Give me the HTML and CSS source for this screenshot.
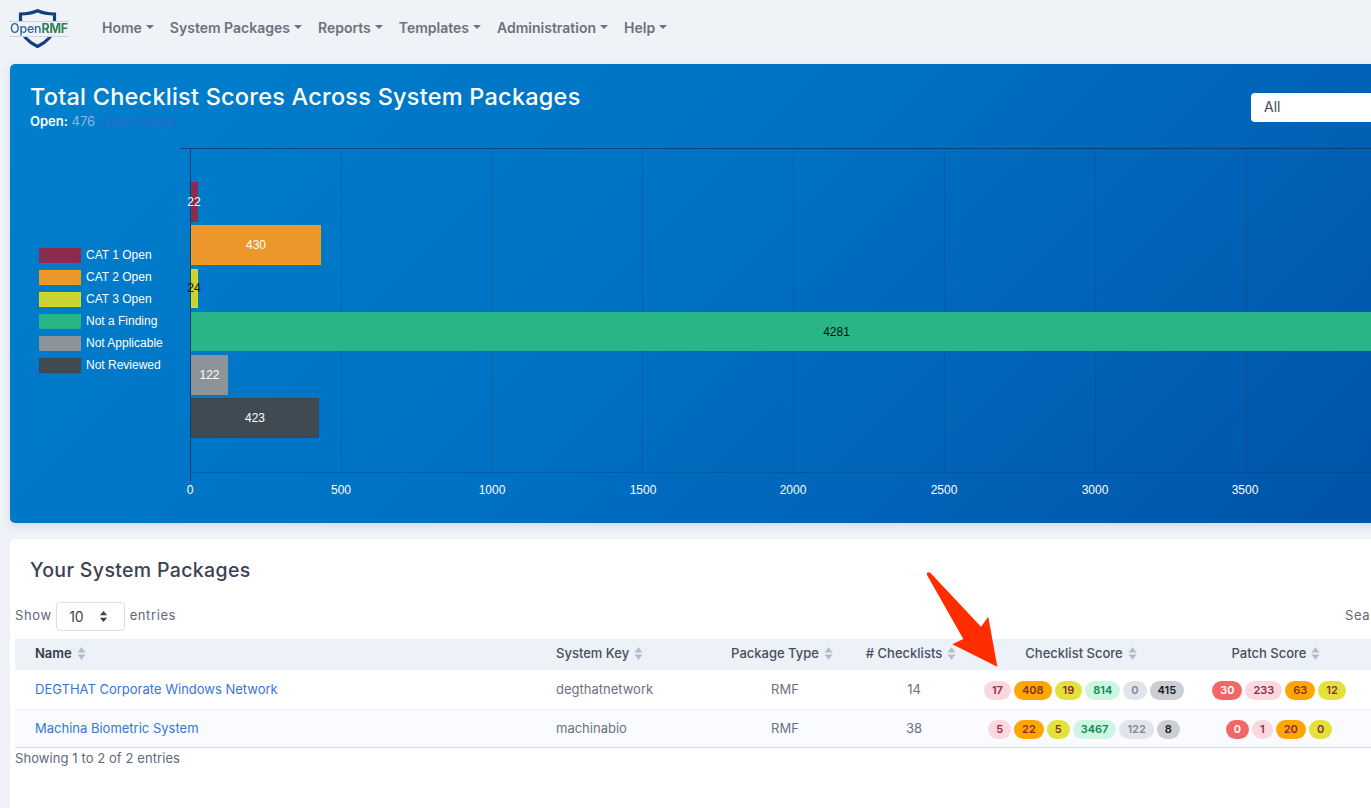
FILE: index.html
```html
<!DOCTYPE html>
<html lang="en">
<head>
<meta charset="utf-8">
<title>OpenRMF</title>
<link rel="stylesheet" href="styles.css">
</head>
<body>
<div class="page">
<header class="topbar">
  <div class="logo">
    <svg class="shield" viewBox="0 0 40 40" width="40" height="40"><path d="M19.5 1.7 C24 3.6 29 4.8 36.5 5 L36.5 16 C36.5 26 28 33.5 19.5 37.5 C11 33.5 2.5 26 2.5 16 L2.5 5 C10 4.8 15 3.6 19.5 1.7 Z" fill="none" stroke="#123f7e" stroke-width="3.2"/></svg>
    <span class="logo-text"><span class="logo-a">Open</span><span class="logo-b">RMF</span></span>
  </div>
  <nav class="nav">
    <a class="nav-item">Home</a>
    <a class="nav-item">System Packages</a>
    <a class="nav-item">Reports</a>
    <a class="nav-item">Templates</a>
    <a class="nav-item">Administration</a>
    <a class="nav-item">Help</a>
  </nav>
</header>

<section class="hero">
  <div class="hero-head">
    <div>
      <h1>Total Checklist Scores Across System Packages</h1>
      <p class="sub"><b>Open:</b> <span class="sub-n">476</span> <span class="sub-l">(save image)</span></p>
    </div>
    <div class="filter">All</div>
  </div>
  <div class="chart">
    <div class="legend">
      <div class="lg"><i class="sw c1"></i>CAT 1 Open</div>
      <div class="lg"><i class="sw c2"></i>CAT 2 Open</div>
      <div class="lg"><i class="sw c3"></i>CAT 3 Open</div>
      <div class="lg"><i class="sw c4"></i>Not a Finding</div>
      <div class="lg"><i class="sw c5"></i>Not Applicable</div>
      <div class="lg"><i class="sw c6"></i>Not Reviewed</div>
    </div>
    <div class="plot">
      <div class="gridlines"><i></i><i></i><i></i><i></i><i></i><i></i><i></i><i></i><i></i></div>
      <div class="bars">
        <div class="bar c1" style="width:7px"><span class="v nudge">22</span></div>
        <div class="bar c2" style="width:130px"><span class="v">430</span></div>
        <div class="bar c3" style="width:7px"><span class="v dark nudge">24</span></div>
        <div class="bar c4" style="width:1291px"><span class="v dark">4281</span></div>
        <div class="bar c5" style="width:37px"><span class="v">122</span></div>
        <div class="bar c6" style="width:128px"><span class="v">423</span></div>
      </div>
      <div class="ticks"><span>0</span><span>500</span><span>1000</span><span>1500</span><span>2000</span><span>2500</span><span>3000</span><span>3500</span></div>
    </div>
  </div>
</section>

<section class="card">
  <h2>Your System Packages</h2>
  <div class="controls">
    <span class="label">Show</span>
    <span class="select">10<svg viewBox="0 0 10 14" width="9" height="13"><path d="M5 1 L9 5.5 H1 Z M5 13 L1 8.5 H9 Z" fill="#3b4252"/></svg></span>
    <span class="label">entries</span>
    <span class="label search">Search:</span>
  </div>
  <table class="tbl">
    <colgroup><col class="w1"><col class="w2"><col class="w3"><col class="w4"><col class="w5"><col class="w6"><col class="w7"></colgroup>
    <thead><tr>
      <th class="l">Name<svg class="sort" viewBox="0 0 8 13"><path d="M4 0 L8 5.5 H0 Z M4 13 L0 7.5 H8 Z"/></svg></th>
      <th class="l">System Key<svg class="sort" viewBox="0 0 8 13"><path d="M4 0 L8 5.5 H0 Z M4 13 L0 7.5 H8 Z"/></svg></th>
      <th>Package Type<svg class="sort" viewBox="0 0 8 13"><path d="M4 0 L8 5.5 H0 Z M4 13 L0 7.5 H8 Z"/></svg></th>
      <th># Checklists<svg class="sort" viewBox="0 0 8 13"><path d="M4 0 L8 5.5 H0 Z M4 13 L0 7.5 H8 Z"/></svg></th>
      <th>Checklist Score<svg class="sort" viewBox="0 0 8 13"><path d="M4 0 L8 5.5 H0 Z M4 13 L0 7.5 H8 Z"/></svg></th>
      <th>Patch Score<svg class="sort" viewBox="0 0 8 13"><path d="M4 0 L8 5.5 H0 Z M4 13 L0 7.5 H8 Z"/></svg></th>
      <th></th>
    </tr></thead>
    <tbody>
      <tr>
        <td class="l"><a class="link">DEGTHAT Corporate Windows Network</a></td>
        <td class="l">degthatnetwork</td><td>RMF</td><td>14</td>
        <td><div class="pills"><span class="p lred">17</span><span class="p orange">408</span><span class="p yellow">19</span><span class="p green">814</span><span class="p gray">0</span><span class="p dgray">415</span></div></td>
        <td><div class="pills"><span class="p red">30</span><span class="p lred">233</span><span class="p orange">63</span><span class="p yellow">12</span></div></td>
        <td></td>
      </tr>
      <tr class="alt">
        <td class="l"><a class="link">Machina Biometric System</a></td>
        <td class="l">machinabio</td><td>RMF</td><td>38</td>
        <td><div class="pills"><span class="p lred">5</span><span class="p orange">22</span><span class="p yellow">5</span><span class="p green">3467</span><span class="p gray">122</span><span class="p dgray">8</span></div></td>
        <td><div class="pills"><span class="p red">0</span><span class="p lred">1</span><span class="p orange">20</span><span class="p yellow">0</span></div></td>
        <td></td>
      </tr>
    </tbody>
  </table>
  <p class="info">Showing 1 to 2 of 2 entries</p>
  <svg class="arrow" viewBox="0 0 90 110" width="90" height="110"><path d="M7 10 C6 7 9 6.5 11 8.5 L61 61.7 L68.3 51.7 L77.3 101.7 L32.3 79.3 L43.3 74 Z" fill="#ff2d00"/></svg>
</section>
</div>
</body>
</html>
```
FILE: styles.css
```css
* { box-sizing: border-box; }
html, body { margin: 0; height: 100%; overflow: hidden; }
body { background: #eff3f8; font-family: "Inter", "Open Sans", sans-serif; color: #5a6677; }
.page { width: 1700px; padding: 0 10px; position: relative; }

.topbar { height: 64px; display: flex; align-items: center; }
.logo { width: 92px; height: 56px; flex: none; margin-top: -6px; position: relative; filter: blur(.35px); }
.shield { position: absolute; left: 8px; top: 8px; }
.logo-text { position: absolute; left: -1px; top: 20px; font-size: 12.5px; font-weight: 500; letter-spacing: -.2px; background: #eff3f8; line-height: 12px; padding: 1px; border-top: 1px solid #c9d3e4; border-bottom: 1px solid #c9d3e4; }
.logo-a { color: #34609c; }
.logo-b { color: #2f7f53; font-weight: 700; }
.nav { display: flex; gap: 16px; margin-top: -10px; }
.nav-item { font-size: 14px; font-weight: 600; color: #6c727c; display: flex; align-items: center; }
.nav-item::after { content: ""; margin-left: 4px; border-top: 4px solid #6c727c; border-left: 4px solid transparent; border-right: 4px solid transparent; }

.hero { width: 1500px; height: 459px; border-radius: 5px; background: linear-gradient(135deg, #0080cc 0%, #0071c3 45%, #004fa5 100%); box-shadow: 0 3px 8px rgba(60,80,110,.15); color: #fff; padding: 18px 20px 0; }
.hero-head { display: flex; justify-content: space-between; height: 66px; width: 1340px; }
h1 { margin: 0; font-size: 23.5px; line-height: 30px; font-weight: 500; letter-spacing: .23px; }
.sub { margin: 0; font-size: 13px; line-height: 18px; }
.sub b { font-weight: 600; }
.sub-n { color: #8ab9e0; }
.sub-l { color: #2f6bcc; }
.filter { background: #fff; color: #444b58; width: 200px; height: 29px; margin-top: 11px; border-radius: 4px; font-size: 14px; padding: 4px 13px; line-height: 19px; margin-right: -81px; flex: none; }

.chart { display: flex; font-family: "Liberation Sans", Arial, sans-serif; font-size: 12px; }
.legend { width: 151px; margin-left: 9px; padding-top: 96px; flex: none; }
.lg { height: 22px; display: flex; align-items: center; gap: 5px; color: #fff; }
.sw { width: 42px; height: 15px; display: block; flex: none; }
.c1 { background: #8a2c4b; border: 1px solid #8e2b50; }
.c2 { background: #ec962c; border: 1px solid #f59d10; }
.c3 { background: #cad332; border: 1px solid #d8dc14; }
.c4 { background: #29b585; border: 1px solid #22b48c; }
.c5 { background: #8d9499; border: 1px solid #8b9298; }
.c6 { background: #3f4a53; border: 1px solid #3b4650; }

.plot { position: relative; width: 1400px; height: 372px; margin-left: -10px; }
.gridlines { position: absolute; left: 10px; top: 0; width: 1400px; height: 325px; border-bottom: 1px solid rgba(20,40,70,.25); display: flex; }
.gridlines::before { content: ""; position: absolute; left: -9px; right: 0; top: 0; border-top: 1px solid rgba(15,35,65,.55); }
.gridlines::after { content: ""; position: absolute; left: 0; top: 0; height: 333px; border-left: 1px solid rgba(15,40,75,.6); }
.gridlines i { width: 150.8px; flex: none; border-left: 1px solid rgba(10,40,80,.18); }
.bars { position: absolute; left: 11px; top: 34px; display: flex; flex-direction: column; gap: 3.8px; }
.bar { height: 39.5px; display: flex; align-items: center; justify-content: center; }
.v { color: #fff; white-space: nowrap; }
.v.dark { color: #111; }
.v.nudge { margin-left: -1px; }
.ticks { position: absolute; left: 10px; top: 335px; width: 1400px; color: #fff; }
.ticks span { position: absolute; transform: translateX(-50%); }
.ticks span:nth-child(1) { left: 0; }
.ticks span:nth-child(2) { left: 151px; }
.ticks span:nth-child(3) { left: 302px; }
.ticks span:nth-child(4) { left: 453px; }
.ticks span:nth-child(5) { left: 603px; }
.ticks span:nth-child(6) { left: 754px; }
.ticks span:nth-child(7) { left: 905px; }
.ticks span:nth-child(8) { left: 1055px; }

.card { width: 1500px; margin-top: 16px; height: 300px; background: #fff; border-radius: 5px 0 0 0; padding: 0 5px; position: relative; font-size: 13px; }
h2 { margin: 0; padding: 17px 15px 0; font-size: 19.5px; line-height: 28px; font-weight: 500; letter-spacing: .35px; color: #3a4252; }
.controls { width: 1400px; display: flex; align-items: center; gap: 4.5px; margin-top: 18px; height: 29px; position: relative; color: #5e6878; letter-spacing: .6px; }
.label { padding-bottom: 3px; }
.select { width: 69px; height: 29px; border: 1px solid #d5dfee; border-radius: 4px; display: flex; align-items: center; justify-content: space-between; padding: 0 16px 0 12px; color: #3f4654; font-size: 14px; letter-spacing: 0; }
.search { position: absolute; left: 1330px; }
.tbl { width: 1444px; table-layout: fixed; border-collapse: collapse; margin-top: 8px; border-bottom: 1px solid #d4e0ef; }
.w1 { width: 521px; } .w2 { width: 175px; } .w3 { width: 148px; } .w4 { width: 110px; } .w5 { width: 230px; } .w6 { width: 160px; } .w7 { width: 100px; }
th { background: #edf1f8; height: 31px; font-size: 13px; font-weight: 500; color: #474f5e; text-align: center; padding: 0 6px 3px 0; }
th.l, td.l { text-align: left; padding-left: 20px; }
th:first-child { color: #333b4a; font-weight: 600; }
.sort { width: 9px; height: 13px; margin-left: 5px; vertical-align: -2px; fill: #b4bdcd; }
td { height: 39px; text-align: center; padding: 0; border-bottom: 1px solid #edf0f5; color: #687282; }
tr:last-child td { border-bottom: 0; height: 38px; }
tr.alt td { background: #fafbfe; }
.link { color: #3577d4; }
.pills { display: flex; justify-content: center; gap: 3px; margin-top: 2px; }
.p { height: 19px; line-height: 19px; border-radius: 10px; padding: 0 8px; font-size: 11px; font-weight: 600; }
.lred { background: #fbd7de; color: #962b46; }
.red { background: #f26868; color: #fff; }
.orange { background: #ffa600; color: #8a2c2c; }
.yellow { background: #e2e23a; color: #8a2c2c; }
.green { background: #cdf6e2; color: #0b8a50; }
.gray { background: #e1e5eb; color: #7d8796; }
.dgray { background: #cbced2; color: #161a20; }
.info { margin: 1px 0 0; line-height: 18px; color: #606a79; letter-spacing: .08px; }
.arrow { position: absolute; left: 910px; top: 26px; }
```
